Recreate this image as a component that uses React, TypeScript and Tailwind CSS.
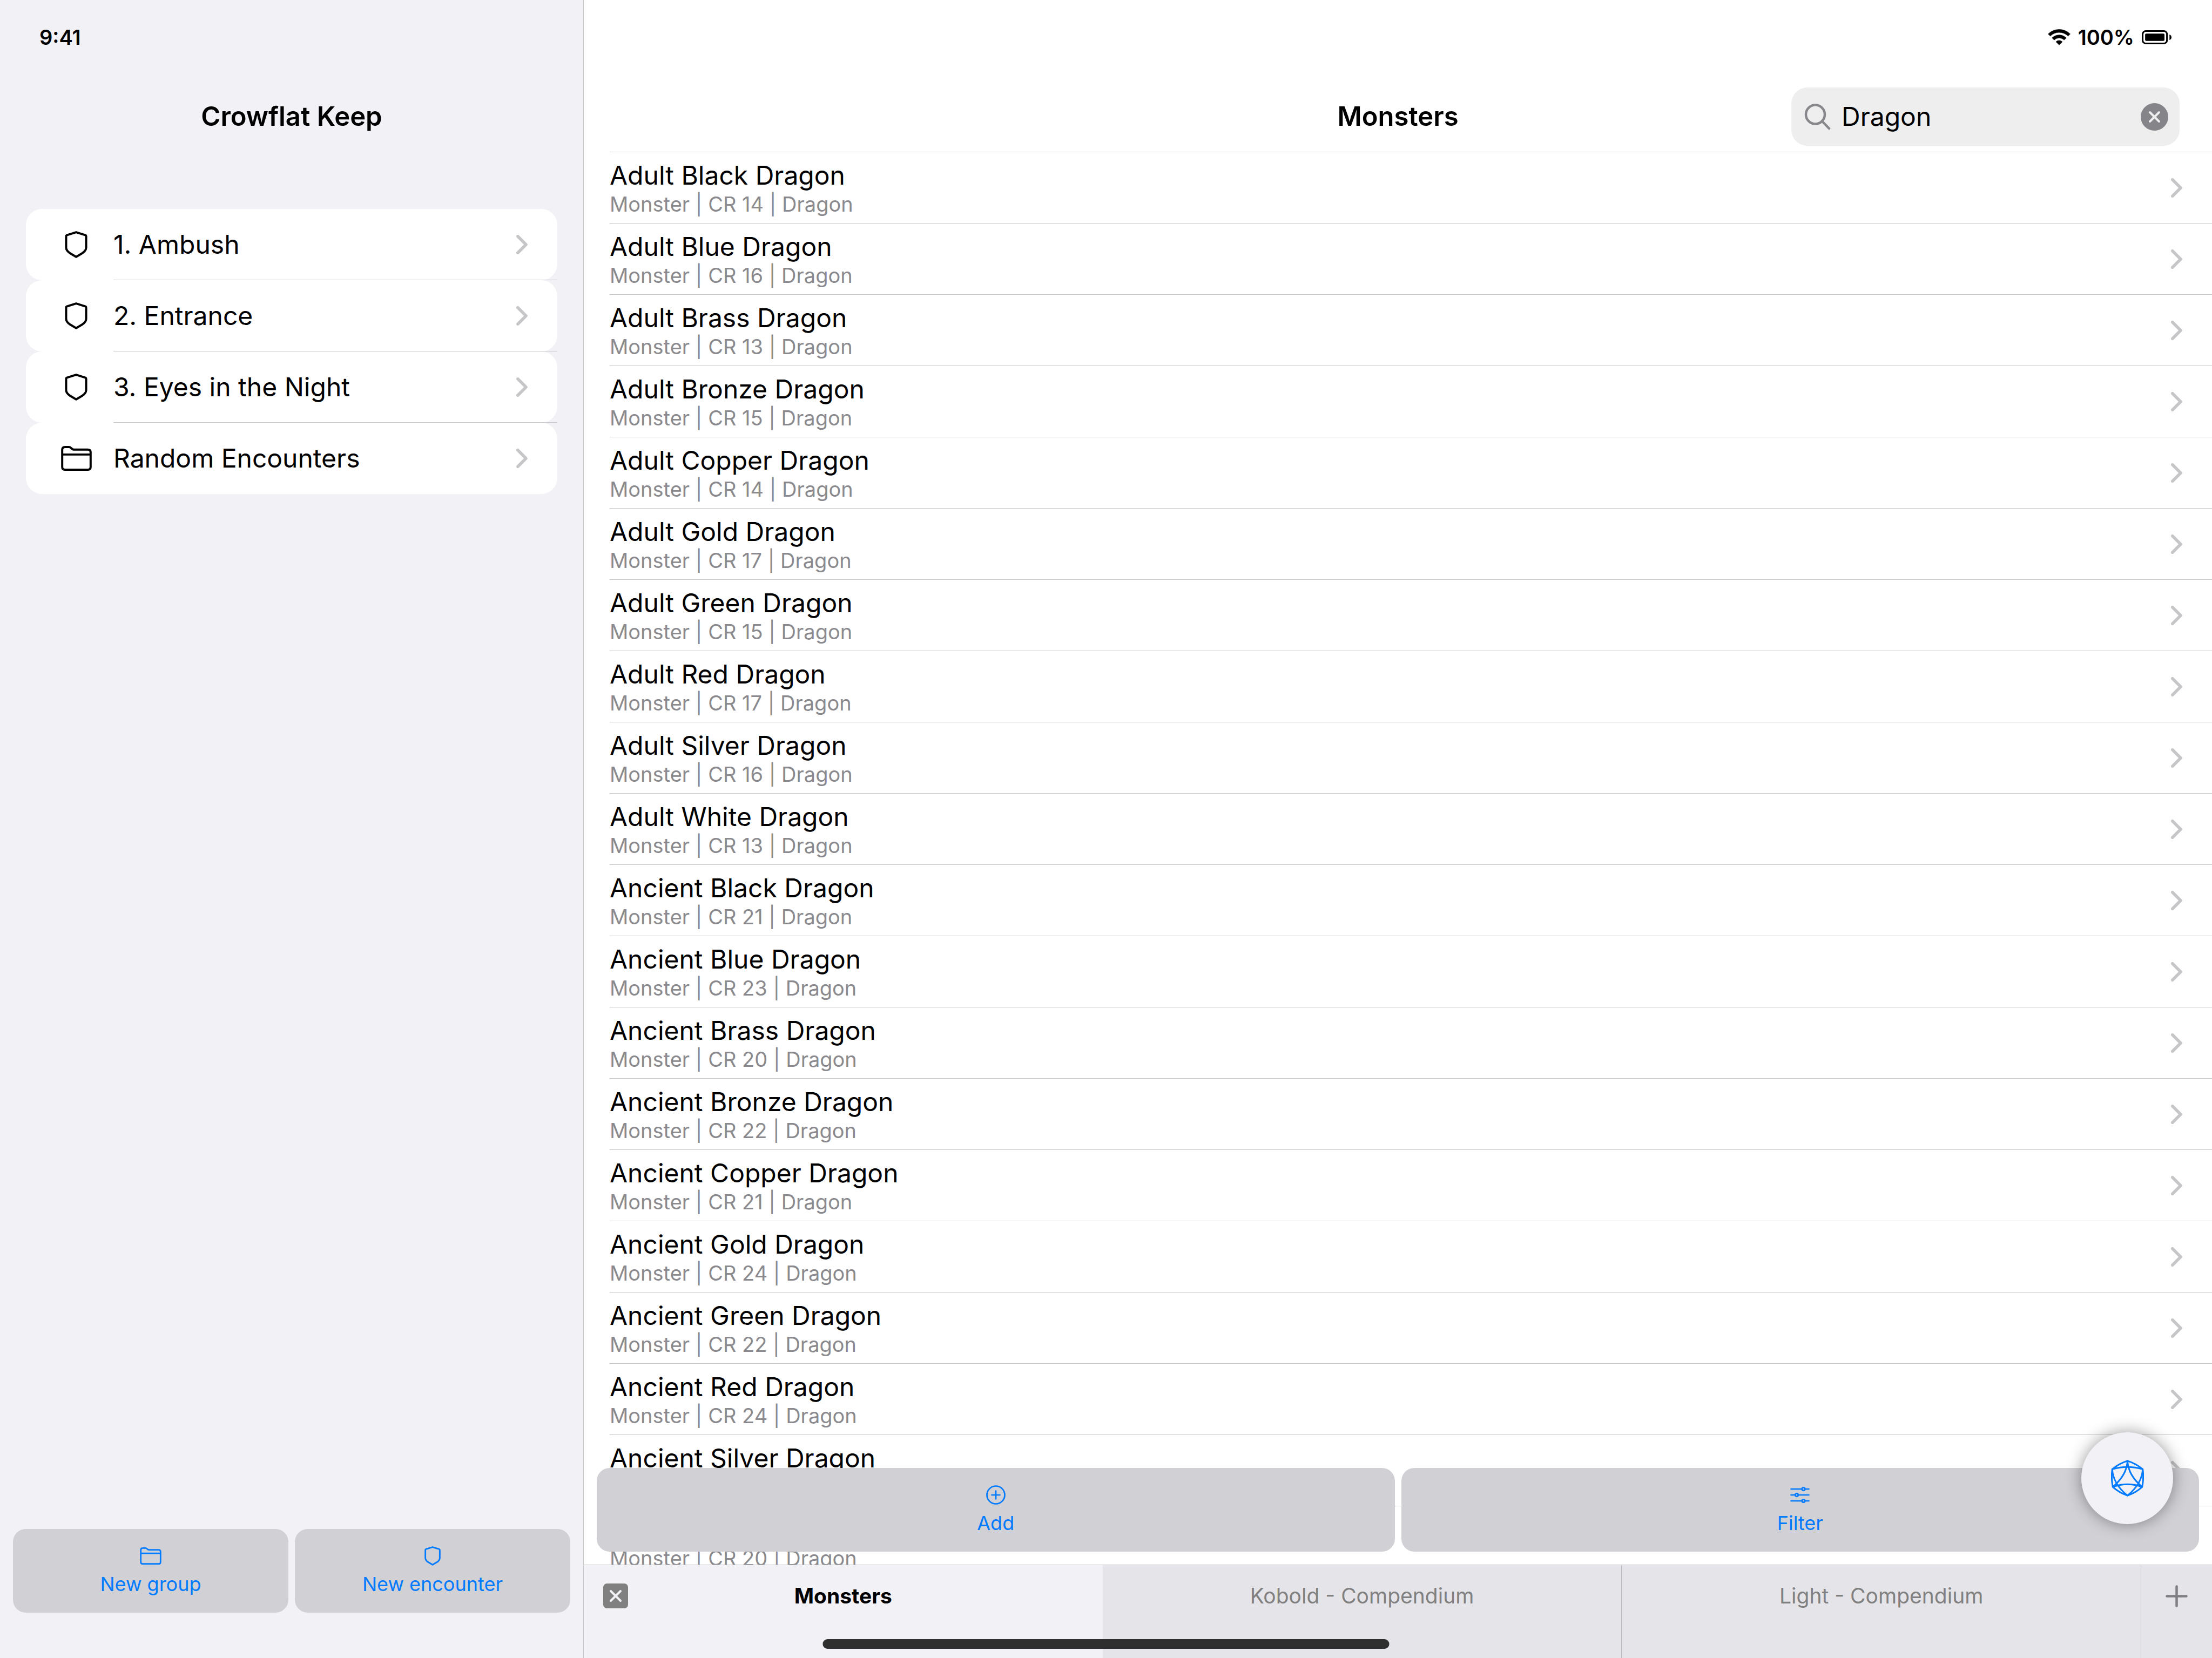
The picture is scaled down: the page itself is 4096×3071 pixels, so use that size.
import { useState, type ReactNode } from "react";

const encounters = [
  { title: "1. Ambush", kind: "encounter" },
  { title: "2. Entrance", kind: "encounter" },
  { title: "3. Eyes in the Night", kind: "encounter" },
  { title: "Random Encounters", kind: "group" },
];

const monsters = [
  { name: "Adult Black Dragon", cr: 14 },
  { name: "Adult Blue Dragon", cr: 16 },
  { name: "Adult Brass Dragon", cr: 13 },
  { name: "Adult Bronze Dragon", cr: 15 },
  { name: "Adult Copper Dragon", cr: 14 },
  { name: "Adult Gold Dragon", cr: 17 },
  { name: "Adult Green Dragon", cr: 15 },
  { name: "Adult Red Dragon", cr: 17 },
  { name: "Adult Silver Dragon", cr: 16 },
  { name: "Adult White Dragon", cr: 13 },
  { name: "Ancient Black Dragon", cr: 21 },
  { name: "Ancient Blue Dragon", cr: 23 },
  { name: "Ancient Brass Dragon", cr: 20 },
  { name: "Ancient Bronze Dragon", cr: 22 },
  { name: "Ancient Copper Dragon", cr: 21 },
  { name: "Ancient Gold Dragon", cr: 24 },
  { name: "Ancient Green Dragon", cr: 22 },
  { name: "Ancient Red Dragon", cr: 24 },
  { name: "Ancient Silver Dragon", cr: 23 },
  { name: "Ancient White Dragon", cr: 20 },
];

function ShieldIcon({ className }: { className: string }) {
  return (
    <svg viewBox="0 0 125 151" className={className} fill="none" stroke="currentColor" strokeWidth="12" strokeLinejoin="round" aria-hidden="true">
      <path d="M62.5 6.5 10 23Q6.5 24.5 6.5 29V92C6.5 107 16 115 27 123L62.5 144 98 123C109 115 118.5 107 118.5 92V29Q118.5 24.5 115 23Z" />
    </svg>
  );
}

function FolderIcon({ className }: { className: string }) {
  return (
    <svg viewBox="0 0 171 139" className={className} fill="none" stroke="currentColor" strokeWidth="12" strokeLinejoin="round" aria-hidden="true">
      <path d="M6 22Q6 6 22 6H44Q50 6 55 11L62 17Q66 20.5 72 20.5H149Q165 20.5 165 36V118Q165 133 150 133H21Q6 133 6 118ZM6 48H165" />
    </svg>
  );
}

function Chevron() {
  return (
    <svg viewBox="0 0 21 36" className="h-9 w-[21px] shrink-0 text-[#c6c6c9]" fill="none" stroke="currentColor" strokeWidth="5.6" strokeLinecap="round" strokeLinejoin="round" aria-hidden="true">
      <path d="M2.8 2.8 18 18 2.8 33.2" />
    </svg>
  );
}

function WifiIcon() {
  return (
    <svg viewBox="-1 -1 126 91" className="h-[30px] w-[42px]" fill="currentColor" stroke="currentColor" strokeWidth="2" strokeLinejoin="round" role="img" aria-label="Wi-Fi">
      <path d="M0 26A88 88 0 0 1 124 26L112 38A71 71 0 0 0 12 38ZM22 48A57 57 0 0 1 102 48L90 60A40 40 0 0 0 34 60ZM44 70A25 25 0 0 1 80 70L62 88Z" />
    </svg>
  );
}

function BatteryIcon() {
  return (
    <svg viewBox="0 0 161 76" className="h-[26px] w-[55px]" fill="currentColor" role="img" aria-label="Battery full">
      <rect x="4.5" y="4.5" width="132" height="67" rx="17" fill="none" stroke="currentColor" strokeWidth="9" />
      <rect x="18" y="18" width="105" height="40" rx="6" />
      <path d="M150 23Q161 27 161 38T150 53Z" />
    </svg>
  );
}

function DieIcon() {
  return (
    <svg viewBox="0 0 186 206" className="h-[68px] w-[61px]" fill="none" stroke="currentColor" strokeWidth="9" strokeLinejoin="round" strokeLinecap="round" aria-hidden="true">
      <path d="M93 5Q45 20 7 52Q0 102 10 152Q45 184 93 201Q141 184 176 152Q186 102 179 52Q141 20 93 5Z" />
      <path d="M93 5Q89 86 10 152Q93 123 176 152Q97 86 93 5" />
      <path d="M7 52Q93 28 179 52Q175 134 93 201Q11 134 7 52" />
    </svg>
  );
}

function ActionButton({ icon, label }: { icon: ReactNode; label: string }) {
  return (
    <button type="button" className="flex h-[155px] flex-1 flex-col items-center justify-center gap-3 rounded-3xl bg-[#d1d0d5] text-[36px] leading-[44px] text-[#007aff]">
      <span className="flex h-9 items-center">{icon}</span>
      {label}
    </button>
  );
}

function Sidebar() {
  return (
    <aside className="flex w-[1081px] shrink-0 flex-col border-r border-[#c6c6c8] bg-[#f2f1f6]">
      <div className="flex h-[138px] items-center pl-[73px] text-[38px] font-semibold">9:41</div>
      <h1 className="pt-6 text-center text-[49px] leading-[108px] font-semibold">Crowflat Keep</h1>
      <ul className="mt-[117px] flex-1 px-12">
        {encounters.map((item, i) => (
          <li key={item.title}>
            <a href="#encounter" className="flex h-[132px] rounded-[30px] bg-white text-[48px]">
              <span className="flex w-[162px] items-center justify-center pl-6">
                {item.kind === "group" ? <FolderIcon className="h-[46px] w-[57px]" /> : <ShieldIcon className="h-[50px] w-[42px]" />}
              </span>
              <span className={i < encounters.length - 1 ? "flex flex-1 items-center justify-between border-b border-[#c6c6c8] pr-[55px]" : "flex flex-1 items-center justify-between pr-[55px]"}>
                {item.title}
                <Chevron />
              </span>
            </a>
          </li>
        ))}
      </ul>
      <div className="flex gap-3 px-6 pb-[84px]">
        <ActionButton label="New group" icon={<FolderIcon className="h-8 w-10" />} />
        <ActionButton label="New encounter" icon={<ShieldIcon className="h-9 w-[30px]" />} />
      </div>
    </aside>
  );
}

function SearchField() {
  const [query, setQuery] = useState("Dragon");
  return (
    <div className="flex h-[108px] w-[719px] items-center justify-self-end rounded-[30px] bg-[#eeeeee] pr-[21px] pl-6">
      <label htmlFor="search" aria-label="Search monsters">
        <svg viewBox="0 0 49 49" className="size-[49px] text-[#88878c]" fill="none" stroke="currentColor" strokeWidth="4.5" strokeLinecap="round" aria-hidden="true">
          <path d="M34.5 34 46 46" />
          <circle cx="20.5" cy="20" r="17.5" />
        </svg>
      </label>
      <input id="search" type="text" value={query} onChange={(e) => setQuery(e.target.value)} className="ml-5 min-w-0 flex-1 bg-transparent text-[48px] outline-none" />
      <button type="button" aria-label="Clear search" onClick={() => setQuery("")}>
        <svg viewBox="0 0 153 153" className="size-[51px]" aria-hidden="true">
          <circle cx="76.5" cy="76.5" r="76.5" fill="#858489" />
          <path d="M51 51 102 102M102 51 51 102" stroke="#eeeeee" strokeWidth="12" strokeLinecap="round" />
        </svg>
      </button>
    </div>
  );
}

function Tab({ label, active }: { label: string; active?: boolean }) {
  return (
    <div className={active ? "flex-1 bg-[#f2f1f6] font-bold text-black" : "flex-1 border-r border-[#b9b8bd] bg-[#e5e4e9] text-[#808080]"}>
      <div className="grid h-[114px] grid-cols-[46px_1fr_46px] items-center px-9 text-[39px]">
        {active && (
          <button type="button" aria-label="Close tab">
            <svg viewBox="0 0 46 46" className="size-[46px]" aria-hidden="true">
              <rect width="46" height="46" rx="7" fill="#808080" />
              <path d="M14 14 32 32M32 14 14 32" stroke="#f2f1f6" strokeWidth="4" strokeLinecap="round" />
            </svg>
          </button>
        )}
        <button type="button" className="col-start-2">{label}</button>
      </div>
    </div>
  );
}

export default function App() {
  return (
    <div className="relative flex h-screen overflow-hidden bg-white font-['Inter',sans-serif] text-black">
      <Sidebar />
      <main className="flex min-w-0 flex-1 flex-col">
        <div className="flex h-[138px] items-center justify-end gap-[14px] pr-[75px] text-[38px] font-semibold">
          <WifiIcon />
          <span>100%</span>
          <BatteryIcon />
        </div>
        <header className="grid grid-cols-[1fr_auto_1fr] items-center px-[60px] pt-6 pb-[11px]">
          <h2 className="col-start-2 text-[49px] font-semibold">Monsters</h2>
          <SearchField />
        </header>
        <section className="relative min-h-0 flex-1">
          <ul className="h-full overflow-hidden pl-12">
            {monsters.map((m) => (
              <li key={m.name} className="border-t border-[#c6c6c8]">
                <a href="#monster" className="flex h-[131px] items-center justify-between pr-[55px]">
                  <span>
                    <span className="block text-[48px] leading-[60px]">{m.name}</span>
                    <span className="block text-[38px] leading-[46px] text-[#8a8a8e]">{`Monster | CR ${m.cr} | Dragon`}</span>
                  </span>
                  <Chevron />
                </a>
              </li>
            ))}
          </ul>
          <div className="absolute inset-x-6 bottom-6 flex gap-3">
            <ActionButton
              label="Add"
              icon={
                <svg viewBox="0 0 36 36" className="size-9" fill="none" stroke="currentColor" strokeWidth="2.7" strokeLinecap="round" aria-hidden="true">
                  <circle cx="18" cy="18" r="16.5" />
                  <path d="M18 10.5V25.5M10.5 18H25.5" />
                </svg>
              }
            />
            <ActionButton
              label="Filter"
              icon={
                <svg viewBox="0 0 36 30" className="h-[30px] w-9" fill="none" stroke="currentColor" strokeWidth="2.7" strokeLinecap="round" aria-hidden="true">
                  <path d="M1.5 4H21M28 4H34.5M1.5 15H8.5M15.5 15H34.5M1.5 26H21M28 26H34.5" />
                  <circle cx="24.5" cy="4" r="2.7" />
                  <circle cx="12" cy="15" r="2.7" />
                  <circle cx="24.5" cy="26" r="2.7" />
                </svg>
              }
            />
          </div>
          <button type="button" aria-label="Roll dice" className="absolute right-[72px] bottom-[75px] flex size-[170px] items-center justify-center rounded-full bg-[#f2f1f6] text-[#007aff] shadow-[0_0_30px_rgba(0,0,0,0.4)]">
            <DieIcon />
          </button>
        </section>
        <nav aria-label="Open tabs" className="flex h-[173px] shrink-0 border-t border-[#c0bfc4]">
          <Tab label="Monsters" active />
          <Tab label="Kobold - Compendium" />
          <Tab label="Light - Compendium" />
          <div className="w-[131px] bg-[#e5e4e9]">
            <button type="button" aria-label="New tab" className="flex h-[114px] w-full items-center justify-center text-[#7f7f83]">
              <svg viewBox="0 0 41 41" className="size-[41px]" fill="none" stroke="currentColor" strokeWidth="4.5" strokeLinecap="round" aria-hidden="true">
                <path d="M20.5 2.5V38.5M2.5 20.5H38.5" />
              </svg>
            </button>
          </div>
        </nav>
      </main>
      <div className="absolute bottom-[17px] left-1/2 h-[18px] w-[1049px] -translate-x-1/2 rounded-full bg-[#2f2f2f]" />
    </div>
  );
}
